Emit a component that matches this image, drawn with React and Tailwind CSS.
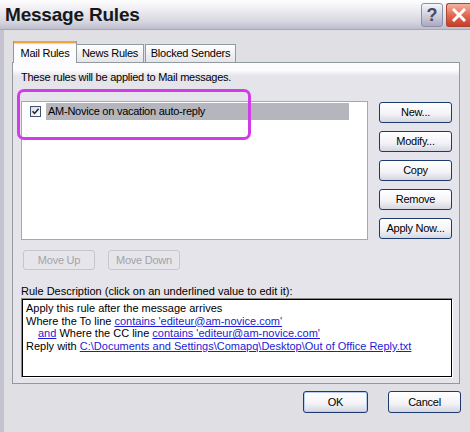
import React from 'react'

const FONT = "font-['Liberation_Sans',Arial,sans-serif]"

function Btn({ children, className = '', disabled = false, isDefault = false }) {
  if (disabled) {
    return (
      <div
        className={`flex items-center justify-center rounded-[3px] border border-[#c6c6cc] bg-[#e6e5ea] text-[#a3a3aa] ${className}`}
      >
        {children}
      </div>
    )
  }
  return (
    <div
      className={`flex items-center justify-center rounded-[3px] border border-[#1d3a6e] bg-[linear-gradient(to_bottom,#ffffff_0%,#f4f4f8_55%,#d6d6e2_100%)] text-black ${
        isDefault ? 'shadow-[inset_0_0_0_1px_#b8cdef]' : ''
      } ${className}`}
    >
      {children}
    </div>
  )
}

function Link({ children }) {
  return <span className="text-[#1c1cd6] underline">{children}</span>
}

function TitleBar() {
  return (
    <div className="flex h-[30px] items-center justify-between border-b border-[#a9a9ba] bg-[linear-gradient(to_bottom,#fefefe_0%,#ececf2_35%,#d6d6e0_75%,#bebdcd_100%)] pl-[5px]">
      <span className="text-[19px] font-bold leading-none tracking-[-0.2px] text-[#16181a]">Message Rules</span>
      <div className="flex items-center gap-[3px] self-start pt-[3px]">
        {/* help */}
        <div className="flex h-[24px] w-[22px] items-center justify-center rounded-[3px] border border-[#8e8ea6] bg-[linear-gradient(to_bottom,#f6f6fb,#c9c9d8_60%,#a9a9c0)]">
          <span className="text-[18px] font-bold leading-none text-[#4a4a5c]">?</span>
        </div>
        {/* close */}
        <div className="flex h-[24px] w-[24px] items-center justify-center rounded-l-[3px] border border-r-0 border-[#a84432] bg-[linear-gradient(to_bottom,#f4b2a2,#e0644c_55%,#c83e28)]">
          <svg width="14" height="14" viewBox="0 0 14 14">
            <path d="M2 2 L12 12 M12 2 L2 12" stroke="#ffffff" strokeWidth="3" strokeLinecap="square" />
          </svg>
        </div>
      </div>
    </div>
  )
}

function Tabs() {
  return (
    <div className="flex h-[22px] items-end pl-[13px] text-[11px] tracking-[-0.25px]">
      <div className="relative z-10 -mb-px flex h-[22px] w-[64px] items-center justify-center border-x border-[#919b9c] bg-[#fcfcfe] pt-[2px] shadow-[inset_0_2px_0_#f2a33a,inset_0_3px_0_#fdd48a]">
        Mail Rules
      </div>
      <div className="flex h-[18px] w-[67px] items-center justify-center border-r border-t border-[#919b9c] bg-[linear-gradient(to_bottom,#ffffff,#e4e4ea)]">
        News Rules
      </div>
      <div className="ml-px flex h-[18px] w-[91px] items-center justify-center border-x border-t border-[#919b9c] bg-[linear-gradient(to_bottom,#ffffff,#e4e4ea)]">
        Blocked Senders
      </div>
    </div>
  )
}

function Panel() {
  return (
    <div className="relative ml-[8px] mr-[10px] h-[322px] border border-[#919b9c] bg-[linear-gradient(to_bottom,#fcfcfe_0px,#fcfcfe_7px,#e5e4ea_13px)] pl-[8px] pr-[7px] pt-[8px] text-[11px] leading-[13px] tracking-[-0.25px]">
      <div>These rules will be applied to Mail messages.</div>

      <div className="mt-[17px] flex gap-[11px]">
        <div className="h-[139px] w-[347px] border border-[#a3a9b3] bg-white pl-[8px] pt-px">
          <div className="flex h-[17px] items-center">
            <div className="flex h-[11px] w-[11px] items-center justify-center border border-[#3f5474] bg-[linear-gradient(to_bottom_right,#dcdce6,#ffffff)]">
              <svg width="9" height="9" viewBox="0 0 9 9">
                <path d="M1.5 4.2 L3.6 6.4 L7.6 1.8" fill="none" stroke="#2b2b2b" strokeWidth="1.6" />
              </svg>
            </div>
            <div className="ml-[5px] flex h-[17px] w-[303px] items-center bg-[#b4b5bd] pl-[2px]">
              AM-Novice on vacation auto-reply
            </div>
          </div>
        </div>

        <div className="flex flex-col gap-[8px] pt-px">
          <Btn className="h-[21px] w-[73px]">New...</Btn>
          <Btn className="h-[21px] w-[73px]">Modify...</Btn>
          <Btn className="h-[21px] w-[73px]">Copy</Btn>
          <Btn className="h-[21px] w-[73px]">Remove</Btn>
          <Btn className="h-[21px] w-[73px]">Apply Now...</Btn>
        </div>
      </div>

      <div className="ml-[2px] mt-[10px] flex gap-[13px]">
        <Btn disabled className="h-[20px] w-[72px]">Move Up</Btn>
        <Btn disabled className="h-[20px] w-[72px]">Move Down</Btn>
      </div>

      <div className="mt-[15px] tracking-normal">Rule Description (click on an underlined value to edit it):</div>

      <div className="h-[80px] w-[432px] border border-b-white border-l-[#8a8a8a] border-r-white border-t-[#8a8a8a]">
        <div className="h-full w-full border border-black bg-white pl-[3px] pt-[2px] leading-[12.7px] tracking-normal">
          <div>Apply this rule after the message arrives</div>
          <div>
            Where the To line <Link>contains 'editeur@am-novice.com'</Link>
          </div>
          <div className="pl-[12px]">
            <Link>and</Link> Where the CC line <Link>contains 'editeur@am-novice.com'</Link>
          </div>
          <div>
            Reply with <Link>C:\Documents and Settings\Comapq\Desktop\Out of Office Reply.txt</Link>
          </div>
        </div>
      </div>

      {/* highlight annotation drawn over the list */}
      <div className="pointer-events-none absolute left-[4px] top-[26px] h-[51px] w-[234px] rounded-[7px] border-[3px] border-[#d23ce8]" />
    </div>
  )
}

export default function App() {
  return (
    <div className={`h-[432px] w-[470px] overflow-hidden bg-[#e0dfe3] text-black ${FONT}`}>
      <TitleBar />
      <div className="flex h-[402px] flex-col border-l-[4px] border-[#c3c2cf]">
        <div className="pt-[10px]">
          <div className="-ml-[4px]">
            <Tabs />
          </div>
        </div>
        <Panel />
        <div className="mt-[7px] flex justify-end gap-[20px] pr-[9px] text-[11px] tracking-[-0.25px]">
          <Btn isDefault className="h-[22px] w-[65px]">OK</Btn>
          <Btn className="h-[22px] w-[73px]">Cancel</Btn>
        </div>
      </div>
    </div>
  )
}
